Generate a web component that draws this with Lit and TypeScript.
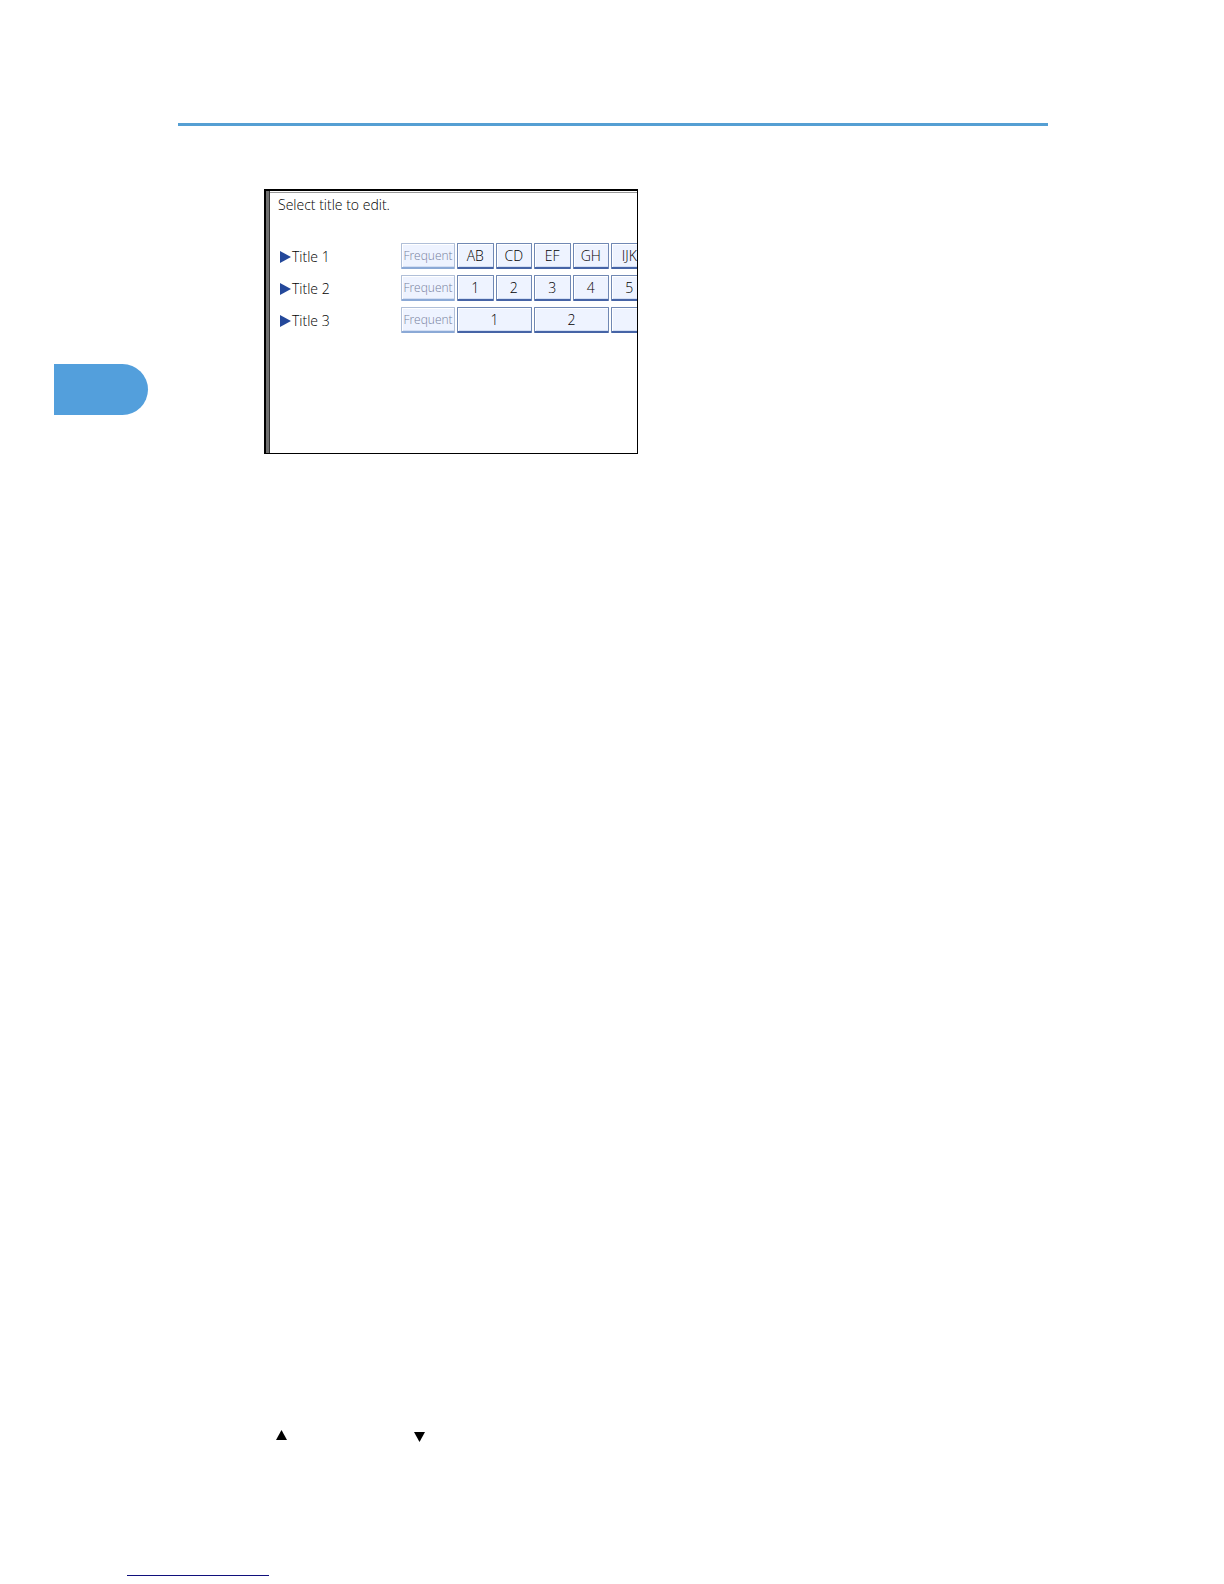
import { LitElement, html, css } from "lit";
import { customElement, property } from "lit/decorators.js";

interface TitleRow {
  label: string;
  keys: string[];
  wide?: boolean;
}

const ROWS: TitleRow[] = [
  { label: "Title 1", keys: ["AB", "CD", "EF", "GH", "IJK"] },
  { label: "Title 2", keys: ["1", "2", "3", "4", "5"] },
  { label: "Title 3", keys: ["1", "2", ""], wide: true },
];

@customElement("title-panel")
export class TitlePanel extends LitElement {
  @property({ attribute: false }) rows: TitleRow[] = [];

  static styles = css`
    :host {
      display: block;
      box-sizing: border-box;
      flex: 0 1 374px;
      min-width: 0;
      min-height: 265px;
      overflow: hidden;
      border: 1px solid #000;
      border-top-width: 2px;
      border-left-width: 2px;
      background: #fff;
      color: #000;
      font: 300 14px/20px "Open Sans", "Noto Sans", sans-serif;
    }
    .screen {
      box-sizing: border-box;
      min-height: 262px;
      border-left: 3px solid #707070;
      box-shadow: inset 1px 0 #333, inset 0 1px #fff, inset 0 2px #999;
      padding: 4px 0 0 9px;
    }
    .prompt {
      margin: 0 0 28px;
      font-size: 14px;
      font-weight: 300;
      line-height: 20px;
    }
    .row {
      display: grid;
      grid-template-columns: 121px 54px 383px;
      column-gap: 2px;
      height: 26px;
      margin-bottom: 6px;
    }
    .title {
      display: flex;
      align-items: center;
      padding: 2px 0 0 2px;
    }
    .arrow {
      width: 12px;
      height: 12px;
    }
    .keys {
      display: grid;
      grid-template-columns: repeat(10, 1fr);
      column-gap: 2px;
    }
    .keys.wide {
      grid-template-columns: repeat(5, 1fr);
    }
    button {
      box-sizing: border-box;
      min-width: 0;
      height: 26px;
      margin: 0;
      padding: 0;
      border: 1px solid #7088b4;
      border-bottom: 2px solid #4664a6;
      border-radius: 1px;
      background: #eef3ff;
      box-shadow: inset 1px 1px #fff, inset 0 -1px #d2def4;
      color: #000;
      font: 300 14px/20px "Open Sans", "Noto Sans", sans-serif;
    }
    button:disabled {
      border-color: #b0bfd8;
      border-bottom-color: #8ba9d6;
      color: #76809c;
      font-size: 12px;
    }
  `;

  render() {
    return html`
      <div class="screen">
        <h1 class="prompt">Select title to edit.</h1>
        ${this.rows.map(
          (row) => html`
            <div class="row">
              <span class="title">
                <svg class="arrow" viewBox="0 0 12 12" aria-hidden="true">
                  <path d="M0 0L11 6L0 12Z" fill="#24489a" />
                </svg>
                ${row.label}
              </span>
              <button type="button" disabled>Frequent</button>
              <div class="keys ${row.wide ? "wide" : ""}">
                ${row.keys.map((key) => html`<button type="button">${key}</button>`)}
              </div>
            </div>
          `
        )}
      </div>
    `;
  }
}

@customElement("app-root")
export class AppRoot extends LitElement {
  static styles = css`
    :host {
      display: flex;
      flex-direction: column;
      box-sizing: border-box;
      min-height: 100vh;
      padding-bottom: 8px;
      background: #fff;
    }
    .rule {
      height: 3px;
      margin: 123px 176px 0 178px;
      background: #559fd3;
    }
    .body {
      display: flex;
      align-items: flex-start;
      gap: 116px;
      padding: 63px 54px 0;
    }
    .tab {
      flex: none;
      width: 94px;
      height: 51px;
      margin-top: 175px;
      border-radius: 0 26px 26px 0;
      background: #539fdc;
    }
    .marks {
      display: flex;
      gap: 127px;
      margin-top: auto;
      padding-left: 276px;
    }
    .mark {
      width: 11px;
      height: 12px;
    }
    .underline {
      width: 142px;
      margin: 133px 0 0 127px;
      border-top: 1px solid #10107c;
    }
  `;

  render() {
    return html`
      <div class="rule"></div>
      <div class="body">
        <div class="tab"></div>
        <title-panel .rows=${ROWS}></title-panel>
      </div>
      <div class="marks">
        <svg class="mark" viewBox="0 0 11 12" aria-hidden="true">
          <path d="M5.5 0L11 10H0Z" />
        </svg>
        <svg class="mark" viewBox="0 0 11 12" aria-hidden="true">
          <path d="M0 2H11L5.5 12Z" />
        </svg>
      </div>
      <div class="underline"></div>
    `;
  }
}
